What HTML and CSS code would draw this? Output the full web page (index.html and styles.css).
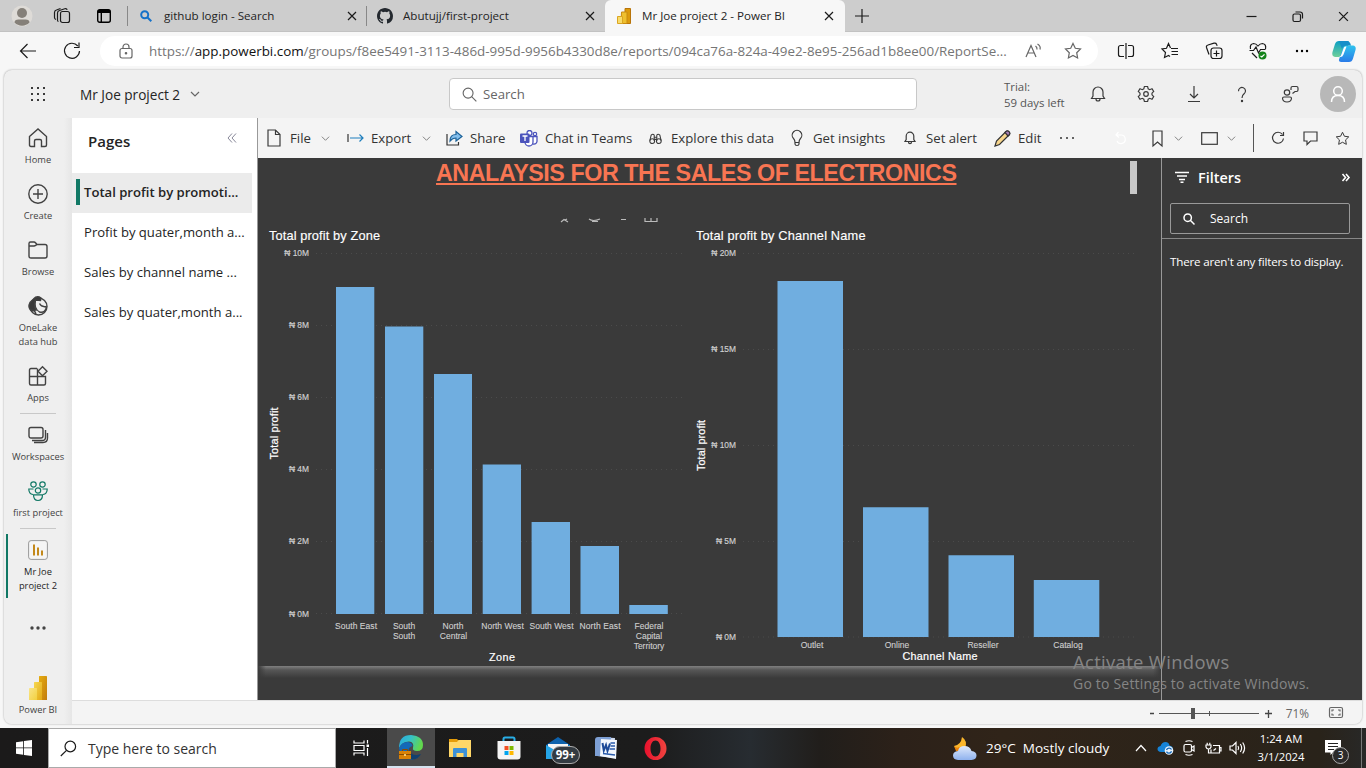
FILE: index.html
```html
<!DOCTYPE html>
<html lang="en">
<head>
<meta charset="utf-8">
<title>Mr Joe project 2 - Power BI</title>
<link rel="stylesheet" href="styles.css">
</head>
<body>
<svg class="defs" aria-hidden="true">
  <defs>
    <linearGradient id="pb1" x1="0" y1="0" x2="1" y2="1"><stop offset="0" stop-color="#e6ad10"/><stop offset="1" stop-color="#c27c0e"/></linearGradient>
    <linearGradient id="pb2" x1="0" y1="0" x2="1" y2="1"><stop offset="0" stop-color="#f6d751"/><stop offset="1" stop-color="#e2a915"/></linearGradient>
    <linearGradient id="pb3" x1="0" y1="0" x2="1" y2="1"><stop offset="0" stop-color="#f9e589"/><stop offset="1" stop-color="#f2d03e"/></linearGradient>
    <linearGradient id="edgeA" x1="0" y1="0" x2="1" y2="0.3"><stop offset="0" stop-color="#2aa9e0"/><stop offset="0.5" stop-color="#35c1c8"/><stop offset="1" stop-color="#62d84e"/></linearGradient>
    <linearGradient id="copA" x1="0" y1="0" x2="0" y2="1"><stop offset="0" stop-color="#0a9fc4"/><stop offset="1" stop-color="#6fd09a"/></linearGradient>
    <linearGradient id="copB" x1="0" y1="0" x2="0" y2="1"><stop offset="0" stop-color="#2fc3ee"/><stop offset="1" stop-color="#2a7be8"/></linearGradient>
    <linearGradient id="cloud" x1="0" y1="0" x2="0" y2="1"><stop offset="0" stop-color="#dfe9fb"/><stop offset="1" stop-color="#8fb2ee"/></linearGradient>
    <linearGradient id="opera" x1="0" y1="0" x2="1" y2="0"><stop offset="0" stop-color="#e8112d"/><stop offset="1" stop-color="#f0443f"/></linearGradient>
    <symbol id="x" viewBox="0 0 10 10"><path d="M1 1l8 8M9 1L1 9"/></symbol>
    <symbol id="chev" viewBox="0 0 10 10"><path d="M1 3l4 4 4-4"/></symbol>
    <symbol id="star" viewBox="0 0 18 18"><path d="M9 1.500l2.300 4.800 5.200.7-3.800 3.700.9 5.300L9 13.500 4.400 16l.9-5.300L1.500 7l5.200-.7z"/></symbol>
    <symbol id="pbi" viewBox="0 0 18 24"><rect x="10" width="8" height="24" rx=".6" fill="url(#pb1)" stroke="none"/><rect x="5" y="6" width="8" height="18" rx=".6" fill="url(#pb2)" stroke="none"/><rect y="12" width="8" height="12" rx=".6" fill="url(#pb3)" stroke="none"/></symbol>
  </defs>
</svg>

<header class="tabs">
  <div class="tab-tools">
    <svg width="22" height="22" viewBox="0 0 22 22"><circle cx="11" cy="11" r="10.500" fill="#dedbd7"/><circle cx="11" cy="8" r="5" fill="#858079"/><path d="M3.500 17.500q0-3 4-3h7q4 0 4 3a10.500 10.500 0 0 1-15 0z" fill="#858079"/></svg>
    <svg class="ic" width="18" height="18" viewBox="0 0 18 18"><rect x="7.500" y="4.500" width="9" height="11" rx="2"/><path d="M5.500 14.500q-1 0-1-1.500V6q0-2 2-2.500l6-2q1.500 0 1.500 1.500M3 12.500q-1.500-.5-1.500-2V5.500q0-2 2-2.500l4-1.500"/></svg>
    <svg class="ic thick" width="14" height="14" viewBox="0 0 14 14"><rect x=".7" y=".7" width="12.600" height="12.600" rx="2"/><path d="M1 2.500h12" stroke-width="3"/><path d="M4.300 4v9"/></svg>
  </div>
  <div class="tab">
    <svg class="ic blue" width="12" height="12" viewBox="0 0 12 12"><circle cx="4.700" cy="4.700" r="3.500"/><path d="M7.300 7.300l4 4"/></svg>
    <span>github login - Search</span>
    <svg class="ic" width="10" height="10"><use href="#x"/></svg>
  </div>
  <div class="tab">
    <svg width="16" height="16" viewBox="0 0 16 16"><path fill="#24292f" d="M8 0C3.580 0 0 3.580 0 8c0 3.540 2.290 6.530 5.470 7.590.4.070.55-.17.55-.38 0-.19-.010-.820-.010-1.490-2.010.37-2.530-.49-2.690-.94-.090-.23-.48-.94-.820-1.130-.28-.15-.68-.52-.010-.53.630-.010 1.080.58 1.230.82.720 1.210 1.870.87 2.330.66.070-.52.280-.87.510-1.070-1.780-.2-3.640-.89-3.640-3.950 0-.87.310-1.590.820-2.150-.080-.2-.36-1.020.080-2.120 0 0 .670-.21 2.200.82a7.600 7.600 0 0 1 4 0c1.530-1.040 2.200-.82 2.200-.82.440 1.100.160 1.920.080 2.120.510.560.820 1.270.820 2.150 0 3.070-1.870 3.750-3.650 3.950.290.250.540.730.540 1.480 0 1.070-.010 1.930-.010 2.200 0 .210.150.460.550.380A8 8 0 0 0 16 8c0-4.420-3.580-8-8-8z"/></svg>
    <span>Abutujj/first-project</span>
    <svg class="ic" width="10" height="10"><use href="#x"/></svg>
  </div>
  <div class="tab active">
    <svg width="14" height="16" viewBox="0 0 14 16"><path d="M8 .5h5.500v15H8z" fill="#dc9a0c" stroke="#b8740a"/><path d="M4.500 4H10v11.500H4z" fill="#efc02e" stroke="#c88a10"/><path d="M.5 8.500h5v7h-5z" fill="#f8dc6c" stroke="#dba522"/></svg>
    <span>Mr Joe project 2 - Power BI</span>
    <svg class="ic" width="10" height="10"><use href="#x"/></svg>
  </div>
  <div class="cell new-tab"><svg class="ic" width="14" height="14" viewBox="0 0 14 14"><path d="M7 0v14M0 7h14"/></svg></div>
  <div class="win">
    <svg class="ic" width="11" height="11" viewBox="0 0 11 11"><path d="M.5 5.500h10"/></svg>
    <svg class="ic" width="11" height="11" viewBox="0 0 11 11"><rect x="1" y="3" width="7.500" height="7.500" rx="1.500"/><path d="M3.500 1h4.500q2.500 0 2.500 2.500v4"/></svg>
    <svg class="ic" width="11" height="11" viewBox="0 0 10 10"><use href="#x"/></svg>
  </div>
</header>

<div class="address">
  <div class="cell"><svg class="ic" width="18" height="16" viewBox="0 0 18 16"><path d="M8.500 1L1.500 8l7 7M1.500 8H17"/></svg></div>
  <div class="cell"><svg class="ic" width="18" height="18" viewBox="0 0 18 18"><path d="M14.800 4A7.500 7.500 0 1 0 16.500 9M16 .5V5.500H11"/></svg></div>
  <div class="pill">
    <svg class="ic grey" width="14" height="16" viewBox="0 0 14 16"><rect x="1" y="5.500" width="12" height="9.500" rx="2"/><path d="M4 5.500V4a3 3 0 0 1 6 0v1.500"/><circle cx="7" cy="10.300" r=".7" fill="#555"/></svg>
    <span class="url">https://<b>app.powerbi.com</b>/groups/f8ee5491-3113-486d-995d-9956b4330d8e/reports/094ca76a-824a-49e2-8e95-256ad1b8ee00/ReportSe...</span>
    <svg class="ic grey" width="17" height="16" viewBox="0 0 17 16"><path d="M1 14L6 2.500 11 14M3 10h6M10.500 3q1.800 1.300 1.500 3.500M12.500 1q3.500 2 2.500 5.500"/></svg>
    <svg class="ic grey" width="18" height="18"><use href="#star"/></svg>
  </div>
  <div class="browser-tools">
    <svg class="ic" width="18" height="18" viewBox="0 0 18 18"><path d="M7 3.500H3.500a2 2 0 0 0-2 2v7a2 2 0 0 0 2 2H7M11 3.500h3.500a2 2 0 0 1 2 2v7a2 2 0 0 1-2 2H11M9 1v16"/></svg>
    <svg class="ic" width="18" height="18" viewBox="0 0 18 18"><path d="M9.500 6L7.500 1.500 5.500 6.300l-4.500.7 3.500 3.500-1 5 4-2 1.500 1M10 6.500h7M10.500 9.500H17M10.500 12.500H17"/></svg>
    <svg class="ic" width="18" height="18" viewBox="0 0 18 18"><rect x="6" y="6" width="11" height="10.500" rx="2.500"/><path d="M11.500 8.500v6M8.500 11.500h6M4 12.500l-2.500-7q-.5-2 1.500-2.500l6-1.800q2-.4 2.500 1l.7 1.500"/></svg>
    <svg class="ic" width="18" height="18" viewBox="0 0 18 18"><path d="M1.500 7Q.5 2 4.500 1.500 7 1.500 9 4q2-2.500 4.500-2.500Q17.500 2 16.500 7M.5 8.500h4L7 5l2.500 6 2-3.500h5M3 11l5 5"/><circle cx="13.500" cy="13.500" r="4" fill="#13831a" stroke="none"/><path d="M11.500 14l1.300 1 2.700-2.700" stroke="#fff"/></svg>
    <svg width="16" height="4" viewBox="0 0 16 4"><circle cx="3" cy="2" r="1.200"/><circle cx="8" cy="2" r="1.200"/><circle cx="13" cy="2" r="1.200"/></svg>
  </div>
  <div class="cell"><svg width="24" height="23" viewBox="0 0 24 23"><path d="M7 1h8.500q2 0 1.500 2.500l-4 11Q12 17 9.500 17H3Q-.5 16.500.5 12L3 4Q4 1 7 1z" fill="url(#copA)"/><path d="M17 22H9q-2.500 0-2-2.500L11 8q.8-2.500 3.500-2.500H21Q24.500 6 23.500 10L21 18.500Q20 22 17 22z" fill="url(#copB)"/><path d="M14.500 6.500h-1Q12 6.500 11.500 8.500L9.500 14q-.5 2.500-2.500 3h1.500q2 0 3-2.500z" fill="#fff"/><path d="M7 1h8q3 0 4 4.500h-5Q11 5.500 10 9z" fill="#168fc9"/></svg></div>
</div>

<div class="page">
  <div class="app-head">
    <div class="cell"><svg width="16" height="16" viewBox="0 0 16 16" fill="#3a3a3a"><path d="M1 1h2v2H1zM7 1h2v2H7zM13 1h2v2H13zM1 7h2v2H1zM7 7h2v2H7zM13 7h2v2H13zM1 13h2v2H1zM7 13h2v2H7zM13 13h2v2H13z"/></svg></div>
    <div class="crumb"><span class="crumb-name">Mr Joe project 2</span><svg class="ic grey" width="10" height="10"><use href="#chev"/></svg></div>
    <div class="search"><svg class="ic grey" width="15" height="15" viewBox="0 0 16 16"><circle cx="6.500" cy="6.500" r="5.300"/><path d="M10.300 10.300l5 5"/></svg><span>Search</span></div>
    <div class="trial">Trial:<br>59 days left</div>
    <div class="head-icons">
      <svg class="ic dark" width="16" height="18" viewBox="0 0 16 18"><path d="M1.500 13.500L3 11V7a5 5 0 0 1 10 0v4l1.500 2.500zM6 14a2 2 0 0 0 4 0"/></svg>
      <svg class="ic dark" width="18" height="18" viewBox="0 0 18 18"><path d="M7.400 1.500h3.200l.6 2.400 1.500.8 2.300-.9 1.700 2.700-1.700 1.700v1.600l1.700 1.700-1.700 2.700-2.300-.9-1.500.8-.6 2.400H7.400l-.6-2.400-1.500-.8-2.300.9-1.700-2.700L3 9.800V8.200L1.300 6.500 3 3.800l2.300.9 1.500-.8z"/><circle cx="9" cy="9" r="2.300"/></svg>
      <svg class="ic dark" width="14" height="18" viewBox="0 0 14 18"><path d="M7 1v12M3 9l4 4 4-4M1 16.500h12"/></svg>
      <svg class="ic dark" width="10" height="17" viewBox="0 0 10 17"><path d="M1.500 5.200a3.500 3.500 0 1 1 5.800 2.400Q5 9.300 5 12"/><circle cx="5" cy="15" r=".6" fill="#444"/></svg>
      <svg class="ic dark" width="18" height="18" viewBox="0 0 18 18"><circle cx="6" cy="7.500" r="2.700"/><path d="M3 12h6q1.500 0 1.500 1.500Q10 17 6 17t-4.500-3.500Q1.500 12 3 12zM10 5V3q0-1.500 1.500-1.500h4Q17 1.500 17 3v2q0 1.500-1.500 1.500H14L11.500 8.500"/></svg>
    </div>
    <div class="cell"><div class="avatar"><svg class="ic white" width="18" height="18" viewBox="0 0 18 18"><circle cx="9" cy="6" r="4.300"/><path d="M2.500 17q0-6.500 6.500-6.500t6.500 6.500"/></svg></div></div>
  </div>

  <div class="body">
    <nav class="rail">
      <a><svg class="ic nav" viewBox="0 0 20 20"><path d="M1.500 8.500L10 1l8.500 7.500V17q0 1.500-1.500 1.500h-3.500V13q0-1.500-1.500-1.500H8Q6.500 11.500 6.500 13v5.500H3Q1.500 18.500 1.500 17z"/></svg><span>Home</span></a>
      <a><svg class="ic nav" viewBox="0 0 20 20"><circle cx="10" cy="10" r="9.200"/><path d="M10 5v10M5 10h10"/></svg><span>Create</span></a>
      <a><svg class="ic nav" viewBox="0 0 20 20"><path d="M1 6V3.500Q1 2 2.500 2H6q1 0 1.500.8L9 4.500h8q2 0 2 2V16q0 2-2 2H3q-2 0-2-2V6h5q1 0 1.700-.7L9 4.500"/></svg><span>Browse</span></a>
      <a class="two"><svg class="ic nav" viewBox="0 0 20 20"><circle cx="10.500" cy="10.500" r="8.500"/><path d="M5.500 3Q9-.8 13 2L12.500 4.500 7.500 4Q5.500 10 8 14L3.500 15Q-2.500 9 5.500 3z" fill="#3a3a3a"/><path d="M7.500 3.500q-2 9 4 12.500 6 1.500 7-5.500M11.500 7.500q2 4 7 3M3 14q4-.5 5 4.500"/></svg><span>OneLake<br>data hub</span></a>
      <a><svg class="ic nav" viewBox="0 0 20 20"><path d="M9 2.500H3Q1.500 2.500 1.500 4v13.500Q1.500 19 3 19h13q1.500 0 1.500-1.500V10.500h-16M9.500 2.500V19"/><path d="M14.500.8l4.500 4.500-4.500 4.500L10 5.300z"/></svg><span>Apps</span></a>
      <i class="sep"></i>
      <a><svg class="ic nav" viewBox="0 0 20 20"><rect x="1" y="2.500" width="14" height="10.500" rx="2"/><path d="M4 15.500h10q3.500 0 3.500-3V5M6 17.500h9q4.500 0 4.500-4.500V8"/></svg><span>Workspaces</span></a>
      <a class="green"><svg class="ic nav" viewBox="0 0 20 20"><circle cx="5.500" cy="3.500" r="2.700"/><circle cx="14.500" cy="3.500" r="2.700"/><circle cx="10" cy="9.500" r="2.700"/><path d="M5.500 13.800h9q0 5.700-4.500 5.700t-4.500-5.700zM5.500 8H.8Q.8 13 5 13.500M14.500 8h4.700q0 5-4.200 5.500"/></svg><span>first project</span></a>
      <i class="sep"></i>
      <a class="two current"><svg class="nav" viewBox="0 0 20 20"><rect x=".6" y=".6" width="18.800" height="18.800" rx="2.500" fill="#f5f5f5" stroke="#999"/><path d="M6 4.500v11M10 7.500v8M14 10.500v5" stroke="#c0830f" stroke-width="1.900"/></svg><span>Mr Joe<br>project 2</span></a>
      <div class="more"><svg width="18" height="6" viewBox="0 0 18 6" fill="#444"><circle cx="3" cy="3" r="1.700"/><circle cx="9" cy="3" r="1.700"/><circle cx="15" cy="3" r="1.700"/></svg></div>
      <a class="product"><svg width="18" height="24"><use href="#pbi"/></svg><span>Power BI</span></a>
    </nav>

    <div class="work">
      <div class="work-row">
        <aside class="pages">
          <div class="pages-head"><span>Pages</span><svg class="ic faint" width="10" height="10" viewBox="0 0 10 10"><path d="M5 .5L1 5l4 4.500M9 .5L5 5l4 4.500"/></svg></div>
          <div class="pg sel"><span>Total profit by promoti...</span></div>
          <div class="pg"><span>Profit by quater,month a...</span></div>
          <div class="pg"><span>Sales by channel name ...</span></div>
          <div class="pg"><span>Sales by quater,month a...</span></div>
        </aside>

        <main class="main">
          <div class="toolbar">
            <div class="cmd drop"><svg class="ic dark" width="14" height="18" viewBox="0 0 14 18"><path d="M1 1h7.500L13 5.500V17H1zM8.500 1v4.500H13"/></svg><span>File</span><svg class="ic chev" width="9" height="9"><use href="#chev"/></svg></div>
            <div class="cmd drop"><svg class="ic" width="17" height="12" viewBox="0 0 17 12"><path d="M1 2v8" stroke="#333"/><path d="M3 6h13M12.500 2.500L16 6l-3.500 3.500" stroke="#1f7fbd"/></svg><span>Export</span><svg class="ic chev" width="9" height="9"><use href="#chev"/></svg></div>
            <div class="cmd"><svg class="ic" width="17" height="16" viewBox="0 0 17 16"><path d="M1 4v11h11.500v-3" stroke="#333"/><path d="M4 11q0-6.500 6-6.500V1.500l6 5-6 4.500V8Q6.500 8 4 11z" fill="#83beec" stroke="#1c6299"/></svg><span>Share</span></div>
            <div class="cmd"><svg width="18" height="17" viewBox="0 0 18 17"><circle cx="9.500" cy="3" r="2.500" fill="#fff" stroke="#4b53bc" stroke-width="1.300"/><circle cx="15" cy="4" r="1.700" fill="#fff" stroke="#4b53bc" stroke-width="1.200"/><path d="M5 6.500h8v5.500a4 4 0 0 1-8 0zM13 6.500h4v5q-.5 3-4 2.500" fill="#fff" stroke="#4b53bc" stroke-width="1.300"/><rect y="3.500" width="9.500" height="9.500" rx="1" fill="#4b53bc"/><path d="M2.500 6h5M5 6v5" stroke="#fff" stroke-width="1.300"/></svg><span>Chat in Teams</span></div>
            <div class="cmd"><svg class="ic dark" width="13" height="13" viewBox="0 0 15 14"><circle cx="3.700" cy="10" r="2.800"/><circle cx="11.300" cy="10" r="2.800"/><path d="M1 9.500L2.500 3Q4.500 1 6 3v7M14 9.500L12.500 3Q10.500 1 9 3v7M6 5.500h3M6 8h3"/></svg><span>Explore this data</span></div>
            <div class="cmd"><svg class="ic dark" width="12" height="18" viewBox="0 0 12 18"><path d="M4 13.500Q4 11 2.500 9.500a4.800 4.800 0 1 1 7 0Q8 11 8 13.500zM4 13.500V15q0 1.500 2 1.500T8 15v-1.500"/></svg><span>Get insights</span></div>
            <div class="cmd"><svg class="ic dark" width="12" height="14" viewBox="0 0 12 14"><path d="M1 10.500h10L9.800 8.500V5a3.800 3.800 0 0 0-7.600 0v3.500zM4.500 11a1.500 1.700 0 0 0 3 0"/></svg><span>Set alert</span></div>
            <div class="cmd"><svg class="ic" width="17" height="17" viewBox="0 0 17 17"><path d="M1 16l1.500-5L12 1.500q1.500-1 3 .5t0 3L5.500 14.500z" fill="#f7d58b" stroke="#333"/><path d="M11 2.500L12.500 1q1.500-.5 2.700.8T15.500 4.500L14 6z" fill="#a67db8" stroke="#333"/></svg><span>Edit</span></div>
            <div class="cell"><svg width="16" height="4" viewBox="0 0 16 4" fill="#333"><circle cx="2" cy="2" r="1"/><circle cx="8" cy="2" r="1"/><circle cx="14" cy="2" r="1"/></svg></div>
            <div class="view-tools">
              <svg class="ic white undo" width="12" height="14" viewBox="0 0 12 14"><path d="M3.500 1L1 4l3 2.500M1.500 4H6a4.300 4.300 0 1 1-4 6"/></svg>
              <svg class="ic dark bookmark" width="11" height="17" viewBox="0 0 11 17"><path d="M1 1h9v15l-4.500-4L1 16z"/></svg>
              <svg class="ic chev c1" width="9" height="9"><use href="#chev"/></svg>
              <svg class="ic dark view" width="17" height="13" viewBox="0 0 17 13"><rect x=".7" y=".7" width="15.600" height="11.600"/></svg>
              <svg class="ic chev c2" width="9" height="9"><use href="#chev"/></svg>
              <i class="bar"></i>
              <svg class="ic dark refresh" width="14" height="14" viewBox="0 0 14 14"><path d="M11.500 3.500A5.500 5.500 0 1 0 12.500 7.500M12.500 1v3.500H9"/></svg>
              <svg class="ic dark comment" width="15" height="15" viewBox="0 0 15 15"><path d="M1 1h13v9H7.500L4 13.500V10H1z"/></svg>
              <svg class="ic dark fav" width="15" height="15"><use href="#star" width="15" height="15"/></svg>
            </div>
          </div>

          <div class="report">
            <div class="canvas">
              <div class="sheet">
                <h1 class="title"><span>ANALAYSIS FOR THE SALES OF ELECTRONICS</span></h1>
                <i class="scroll"></i>
                <div class="charts">
                  <svg width="432" height="448" viewBox="258 218 432 448">
                    <path d="M561 222l3-2.500 4 2.500M567 219l-2 1M589 219q4 3 11 0M592 221.500h6M621 219.500h5M645 218v3.500h12V218M651 218v3" stroke="#bbb" fill="none" stroke-width="1.200"/>
                    <text class="ct" x="269" y="240" textLength="111">Total profit by Zone</text>
                    <path class="grid" d="M316 253.500H686M316 325.500H686M316 397.500H686M316 469.500H686M316 541.500H686M316 613.500H686"/>
                    <g class="tick"><text x="309" y="256">₦ 10M</text><text x="309" y="328">₦ 8M</text><text x="309" y="400">₦ 6M</text><text x="309" y="472">₦ 4M</text><text x="309" y="544">₦ 2M</text><text x="309" y="617">₦ 0M</text></g>
                    <g class="bars"><path d="M336 287h38.300v327H336zM385 326.500h38.300V614H385zM434 374h38v240H434zM482.700 464.500H521V614h-38.300zM531.600 522H570v92h-38.400zM580.500 546H619v68h-38.500zM629.300 605h38.500v9h-38.500z"/></g>
                    <g class="cat"><text x="356" y="629" textLength="42">South East</text><text x="404" y="629">South</text><text x="404" y="639">South</text><text x="453" y="629">North</text><text x="453.500" y="639">Central</text><text x="502.500" y="629" textLength="42.500">North West</text><text x="551.500" y="629" textLength="44">South West</text><text x="600" y="629" textLength="41">North East</text><text x="649" y="629">Federal</text><text x="649" y="639">Capital</text><text x="649" y="649">Territory</text></g>
                    <text class="ax" x="502" y="661" textLength="26">Zone</text>
                    <text class="ax" transform="translate(278 433.500) rotate(-90)" textLength="52">Total profit</text>
                  </svg>
                  <svg width="471" height="448" viewBox="690 218 471 448">
                    <text class="ct" x="696" y="240" textLength="169.500">Total profit by Channel Name</text>
                    <path class="grid" d="M743 253.500H1134M743 349.500H1134M743 445.500H1134M743 541.500H1134M743 637H1134"/>
                    <g class="tick"><text x="736" y="256">₦ 20M</text><text x="736" y="352">₦ 15M</text><text x="736" y="448">₦ 10M</text><text x="736" y="544">₦ 5M</text><text x="736" y="640">₦ 0M</text></g>
                    <g class="bars"><path d="M777.500 281H843v356h-65.500zM863 507.300h65.500V637H863zM948.500 555.300H1014V637h-65.500zM1033.800 580h65.500v57h-65.500z"/></g>
                    <g class="cat"><text x="812" y="648">Outlet</text><text x="897" y="648">Online</text><text x="983" y="648" textLength="31">Reseller</text><text x="1068" y="648">Catalog</text></g>
                    <text class="ax" x="940" y="660" textLength="75">Channel Name</text>
                    <text class="ax" transform="translate(705 445.500) rotate(-90)" textLength="51">Total profit</text>
                  </svg>
                </div>
              </div>
              <i class="shade"></i>
            </div>
            <aside class="filters">
              <div class="f-head"><svg class="ic white f2" width="14" height="12" viewBox="0 0 14 12"><path d="M0 1.500h14M2 5h10M4 8.500h6M5.500 11.300h3"/></svg><span>Filters</span><svg class="ic white f2" width="8" height="9" viewBox="0 0 8 9"><path d="M.5 1L3.500 4.500.5 8M4 1l3 3.500L4 8"/></svg></div>
              <div class="f-search"><svg class="ic white f1" width="12" height="12" viewBox="0 0 12 12"><circle cx="4.700" cy="4.700" r="3.700"/><path d="M7.300 7.300l4.200 4.200"/></svg><span>Search</span></div>
              <p class="f-empty">There aren't any filters to display.</p>
            </aside>
          </div>
        </main>
      </div>
      <footer class="status">
        <svg width="122" height="16" viewBox="0 0 122 16"><path d="M0 8.500h4M115 8.500h8M118.500 5v8" stroke="#444" stroke-width="1.300"/><path d="M9 8.500h100M59.500 6v5" stroke="#555"/><rect x="41" y="3" width="4" height="11" fill="#555"/></svg>
        <span>71%</span>
        <svg class="ic grey" width="14" height="11" viewBox="0 0 14 11"><rect x=".5" y=".5" width="13" height="10" rx="1.500"/><path d="M3 4.500V3h2M9 3h2v1.500M11 6.500V8H9M5 8H3V6.500"/></svg>
      </footer>
    </div>
  </div>
</div>

<div class="taskbar">
  <div class="cell"><svg width="16" height="16" viewBox="0 0 16 16" fill="#fff"><path d="M0 2.200L7.200 1.200V7.500H0zM8 1.100L16 0v7.500H8zM0 8.300h7.200v6.400L0 13.700zM8 8.300h8V16l-8-1.100z"/></svg></div>
  <div class="t-search"><svg class="ic" width="17" height="17" viewBox="0 0 17 17"><circle cx="10.300" cy="6.500" r="5.300"/><path d="M6.500 10.300L.8 16"/></svg><span>Type here to search</span></div>
  <div class="cell"><svg class="ic white" width="17" height="16" viewBox="0 0 17 16"><path d="M1 .5v2.500h10V.5M1 15.500V13h10v2.500M1 5.500h10v5H1zM14.500 0v3.500M14.500 8v8"/><rect x="13.500" y="4.500" width="2.500" height="2.500" fill="#fff" stroke="none"/></svg></div>
  <div class="cell open"><svg width="26" height="26" viewBox="0 0 26 26"><path d="M1 14Q1 1 13 1q12 1 12 10 0 6-6 6-5-.5-4-3 1.500-6-4-6.500Q4 7.500 1 14z" fill="url(#edgeA)"/><path d="M1 14Q4 7.500 10 8q4 .5 4.500 4-4 1-4 5 1 6 11 5-3.500 3.500-8.500 3.500Q2 25 1 14z" fill="#1469b8"/><path d="M11 16q2 5.500 8 5l4-1q-3 5.500-9 5.500-6-2-3-9.500z" fill="#12406f"/><rect x="1" y="17" width="12" height="8" fill="#d98207"/><path d="M1 20.500h12" stroke="#8a4b00"/><path d="M4.500 17v-1.500h5V17" stroke="#8a4b00" fill="none"/><circle cx="7" cy="21" r="1.100" fill="#ffe18d"/></svg></div>
  <div class="cell"><svg width="22" height="20" viewBox="0 0 22 20"><path d="M0 1h8l2 2v4H0z" fill="#e59c09"/><path d="M0 4h8l1.500-2H22v17H0z" fill="#ffd768"/><path d="M4 19v-8q0-1 1-1h12q1 0 1 1v8h-3.500v-4h-7v4z" fill="#3d91d6"/></svg></div>
  <div class="cell"><svg width="24" height="24" viewBox="0 0 24 24"><path d="M6.500 7V3q0-1.500 1.500-1.500h8q1.500 0 1.500 1.500v4" fill="none" stroke="#29aee6" stroke-width="2"/><path d="M.5 5h23v15.500q0 3-3 3h-17q-3 0-3-3z" fill="#f4f4f4"/><path fill="#f25022" d="M7.500 10h4v4h-4z"/><path fill="#7fba00" d="M12.500 10h4v4h-4z"/><path fill="#00a4ef" d="M7.500 15h4v4h-4z"/><path fill="#ffb900" d="M12.500 15h4v4h-4z"/></svg></div>
  <div class="cell mail"><svg width="24" height="22" viewBox="0 0 24 22"><path d="M0 8L12 0l12 8v14H0z" fill="#0d62ad"/><path d="M2 7h20v9H2z" fill="#f4f4f4"/><path d="M0 8l12 7 12-7v14H0z" fill="#25a5e8"/></svg><b class="badge">99+</b></div>
  <div class="cell"><svg width="24" height="24" viewBox="0 0 24 24"><path d="M4 1l17 1-1 20-17-2z" fill="#cbd8ee"/><path d="M1 4Q1 1 4 1h13l-2 19H1z" fill="#7d9fd4"/><path d="M7 3l16 1-1 19-16-3z" fill="#f3f7fd"/><path d="M8.500 7l1.300 7.500L12 9l1.500 6L16 7.500" fill="none" stroke="#1d4a98" stroke-width="2"/><path d="M16.500 7H21M16.500 10H21M15.500 13H21M9 17.500l12 1.500" stroke="#2a5bab" stroke-width="1.400"/></svg></div>
  <div class="cell"><svg width="23" height="23" viewBox="0 0 23 23"><path fill="url(#opera)" fill-rule="evenodd" d="M11.500 0a11 11.500 0 1 0 0 23 11 11.500 0 0 0 0-23zm0 3.500c3 0 5 3.500 5 8s-2 8-5 8-5-3.500-5-8 2-8 5-8z"/></svg></div>
  <div class="weather"><svg width="26" height="25" viewBox="0 0 26 25"><path d="M10 1q6 4 3 11l-8 3-3-5q7-1 8-9z" fill="#fbb62c"/><path d="M2 10q3 3 5 1l2 4H4z" fill="#e8820c"/><path d="M6 24q-5-.5-5-4.500t5-4.500q1-5 6.500-5t7 5q5 .5 5 4.500t-5 4.500z" fill="url(#cloud)"/></svg><span>29°C&nbsp; Mostly cloudy</span></div>
  <div class="tray">
    <svg class="ic white" width="12" height="8" viewBox="0 0 12 8"><path d="M1 7l5-5.500L11 7"/></svg>
    <svg width="17" height="14" viewBox="0 0 17 14"><path d="M4 11Q.5 10.500.5 8t3-3Q5 1 8.500 1 12 1 12.500 4.500q3 .5 3.500 3V11z" fill="#1583d7"/><circle cx="12" cy="9.500" r="4.300" fill="#e9f2fb"/><path d="M9.500 9a2.700 2.700 0 0 1 5-.5M14.500 10.300a2.700 2.700 0 0 1-5 .3" stroke="#1268b8" fill="none" stroke-width="1.300"/></svg>
    <svg class="ic white" width="12" height="16" viewBox="0 0 12 16"><rect x="1" y="4.500" width="7.500" height="7.500" rx="1.500"/><path d="M8.500 7.500L11 6v5l-2.500-1.500M2.500 1.500q3.500-1.500 7 0M2.500 14.500q3.500 1.500 7 0"/></svg>
    <svg class="ic white" width="17" height="13" viewBox="0 0 17 13"><path d="M6 7.500V11h8.500V3.500H8M14.500 5.500H16V9h-1.500M1 3h5v2Q5.500 7 3.500 7T1 5zM2.200 3V.8M4.800 3V.8M3.500 7v4H6M8.500 8.500l2.500-2"/></svg>
    <svg class="ic white" width="17" height="14" viewBox="0 0 17 14"><path d="M1 5h2.500L7 1.500v11L3.500 9H1zM9 5q1.300 2 0 4M11.300 3q2.700 4 0 8M13.700 1.500q3.800 5.500 0 11"/></svg>
  </div>
  <div class="clock">1:24 AM<br>3/1/2024</div>
  <div class="cell note"><svg width="16" height="16" viewBox="0 0 16 16"><path d="M0 0h16v12.500H8L5.500 15v-2.500H0z" fill="#fff"/><path d="M3 3.500h10M3 6.500h10M3 9.500h6" stroke="#222"/></svg><b class="count">3</b></div>
</div>

<div class="watermark"><div class="w1">Activate Windows</div><div class="w2">Go to Settings to activate Windows.</div></div>
</body>
</html>
```
FILE: styles.css
```css
* { box-sizing: border-box; }
body { margin: 0; width: 1366px; height: 768px; overflow: hidden; position: relative; background: #f7f7f7; color: #242424; font-family: "Open Sans", "Noto Sans", sans-serif; font-size: 13px; display: flex; flex-direction: column; white-space: nowrap; }
svg { display: block; flex: none; }
.defs { position: absolute; width: 0; height: 0; }
.ic { fill: none; stroke: #1b1b1b; stroke-width: 1.2; overflow: visible; }
.ic.grey { stroke: #666; }
.ic.dark { stroke: #3a3a3a; }
.ic.white { stroke: #fff; }
.ic.faint { stroke: #889; stroke-width: 1; }
.ic.blue { stroke: #1672c9; stroke-width: 2; }
.ic.thick { stroke-width: 1.4; stroke: #000; }
.cell { display: grid; place-items: center; }

/* Browser tabs */
.tabs { flex: none; height: 32px; background: #cdcdcd; display: flex; font-size: 11.6px; box-shadow: inset 0 -1px #c2c2c2; }
.tab-tools { width: 128px; display: grid; grid-template-columns: 44px 36px 48px; place-items: center; background: linear-gradient(#888, #888) 127px 6px / 1px 20px no-repeat; }
.tab { width: 239px; padding-bottom: 1px; display: grid; grid-template-columns: 36px 1fr 31px; align-items: center; justify-items: center; background: linear-gradient(#888, #888) 238px 6px / 1px 20px no-repeat; }
.tab span { justify-self: start; }
.tab + .tab { width: 238px; background: none; }
.tab.tab.active { width: 240px; grid-template-columns: 37px 1fr 32px; background: #f7f7f7; border-radius: 6px 6px 0 0; }
.new-tab { width: 34px; }
.win { margin-left: auto; display: grid; grid-template-columns: repeat(3, 46px); place-items: center; }

/* Address bar */
.address { flex: none; height: 38px; padding-left: 6px; display: grid; grid-template-columns: 44px 44px 1004px 226px 40px; align-items: center; }
.pill { margin-left: 6px; height: 30px; border-radius: 15px; background: #fff; padding: 0 5px 0 3px; display: grid; grid-template-columns: 46px 1fr 40px 40px; align-items: center; justify-items: center; }
.url { justify-self: start; color: #757575; font-size: 13.4px; }
.url b { color: #111; font-weight: 400; }
.browser-tools { padding-left: 6px; display: grid; grid-template-columns: repeat(5, 44px); place-items: center; }

/* App shell */
.page { flex: none; margin: 0 4px; height: 654px; border-radius: 8px; overflow: hidden; background: #efefef; box-shadow: 0 0 2px #999; }
.app-head { height: 48px; display: grid; grid-template-columns: 68px 377px 468px 87px 70px 240px 48px; align-items: center; }
.app-head > :nth-child(4) { grid-column: 5; }
.crumb { display: flex; align-items: center; padding-left: 8px; gap: 10px; }
.crumb-name { font-size: 13.6px; }
.search { height: 32px; border: 1px solid #c8c8c8; border-radius: 4px; background: #fff; display: flex; align-items: center; padding-left: 12px; gap: 6px; color: #666; font-size: 13.2px; }
.trial { font-size: 11.4px; line-height: 16px; padding-top: 1px; color: #555; }
.head-icons { display: grid; grid-template-columns: repeat(5, 48px); place-items: center; }
.avatar { width: 36px; height: 36px; border-radius: 50%; background: #b8b8b8; display: grid; place-items: center; }
.avatar .ic { stroke-width: 1.5; }
.body { display: flex; height: 606px; }

.rail { width: 68px; display: flex; flex-direction: column; align-items: center; background: linear-gradient(90deg, #efefef 60px, #e6e6e6); }
.rail a { width: 68px; height: 56px; padding-top: 10px; display: flex; flex-direction: column; align-items: center; gap: 5px; font-size: 9.3px; line-height: 14px; text-align: center; color: #424242; }
.rail a.two { height: 70px; }
.nav { width: 20px; height: 20px; stroke: #424242; }
.ic.nav { stroke-width: 1.4; }
.green .nav { stroke: #117865; stroke-width: 1.2; }
.sep { width: 36px; height: 1px; margin: 1px 0; background: #c8c8c8; }
.rail a.current { color: #242424; font-weight: 500; background: linear-gradient(#117865, #117865) 2px 4px / 2px 64px no-repeat; }
.more { height: 56px; display: grid; place-items: center; }
.rail a.product { margin-top: 10px; gap: 3px; }

.work { width: 1290px; }
.work-row { display: flex; height: 582px; }
.pages { width: 186px; background: #fff; border-right: 1px solid #999; }
.pages-head { height: 55px; padding: 0 20px 10px 16px; display: flex; align-items: center; justify-content: space-between; font-size: 15px; font-weight: 600; }
.pages-head svg { margin-bottom: 5px; }
.pg { height: 40px; width: 180px; padding: 0 0 2px 12px; display: flex; align-items: center; font-size: 13.1px; }
.pg.sel { background: linear-gradient(#117865, #117865) 4px 6px / 4px 26px no-repeat #ebebeb; font-weight: 600; }

.main { width: 1104px; }
.toolbar { height: 40px; background: #f4f4f4; display: grid; grid-template-columns: 81px 99px 75px 126px 142px 113px 92px 65px 32px 279px; align-items: center; font-size: 13.2px; color: #333; }
.cmd { display: grid; grid-template-columns: 32px 1fr; align-items: center; justify-items: center; }
.cmd.drop { grid-template-columns: 32px 1fr 30px; }
.cmd span { justify-self: start; }
.chev { stroke: #777; stroke-width: 1; }
.view-tools { display: flex; align-items: center; }
.undo { margin-left: 32px; }
.bookmark { margin-left: 25px; }
.c1 { margin-left: 11px; }
.view { margin-left: 18px; }
.c2 { margin-left: 9px; }
.bar { width: 1px; height: 28px; margin-left: 17px; background: #555; }
.refresh { margin-left: 17px; }
.comment { margin-left: 18px; }
.fav { margin-left: 17px; }

/* Report */
.report { height: 542px; display: flex; background: #3a3a3a; color: #fff; }
.canvas { width: 903px; }
.sheet { height: 508px; display: grid; grid-template-columns: 870px 33px; grid-template-rows: 60px 448px; }
.title { margin: 0; padding-left: 178px; font: 700 23.3px/31px "Liberation Sans", Arial, sans-serif; letter-spacing: -0.45px; color: #f87552; text-decoration: underline; text-decoration-thickness: 2px; text-underline-offset: 2px; }
.scroll { width: 7px; height: 33px; margin: 3px 0 0 2px; background: #c8c8c8; }
.charts { grid-column: 1 / 3; display: flex; }
.shade { display: block; height: 12px; background: linear-gradient(90deg, #3a3a3a, transparent 8px 895px, #3a3a3a), linear-gradient(#808080, #565656 4px, #3a3a3a); }
.charts text { font-family: "Liberation Sans", Arial, sans-serif; fill: #fff; }
.charts .ct { font-size: 12.8px; stroke: #fff; stroke-width: .15; }
.charts .ax { font-size: 10.8px; text-anchor: middle; stroke: #fff; stroke-width: .2; }
.charts .tick text { font-size: 8.4px; text-anchor: end; fill: #d0d0d0; stroke: #d0d0d0; stroke-width: .15; }
.charts .cat text { font-size: 8.5px; text-anchor: middle; fill: #d0d0d0; stroke: #d0d0d0; stroke-width: .1; }
.grid { stroke: #4b4b4b; stroke-width: 1; stroke-dasharray: 1 4; }
.bars { fill: #70aee0; }

.filters { width: 201px; border-left: 1px solid #999; font-size: 12px; }
.f-head { height: 40px; padding: 0 12px 2px 13px; display: grid; grid-template-columns: 23px 1fr 8px; align-items: center; font-size: 14.4px; font-weight: 600; }
.f2 { stroke-width: 1.6; }
.f1 { stroke-width: 1.5; }
.f-search { width: 180px; height: 31px; margin: 5px 0 0 8px; border: 1px solid #999; border-radius: 2px; display: flex; align-items: center; padding-left: 12px; gap: 15px; }
.f-empty { margin: 4px 0 0; border-top: 1px solid #888; padding: 15px 0 0 8px; line-height: 16px; font-size: 11.6px; letter-spacing: -0.18px; }

.status { height: 24px; background: #f4f4f4; border-top: 1px solid #ddd; display: flex; align-items: center; justify-content: flex-end; padding-right: 19px; font-size: 11.8px; color: #666; }
.status span { margin: 0 20px 0 14px; }

/* Windows taskbar */
.taskbar { flex: none; margin-top: 4px; height: 40px; color: #fff; background: linear-gradient(#777, #777) 1361px 0 / 1px 40px no-repeat, linear-gradient(90deg, #1b1a1a, #1c1c1c 650px, #272c31 750px, #211e1b 820px, #2c2119 900px, #302419 1000px, #29231a 1320px, #282827); display: grid; grid-template-columns: 48px 288px 51px 48px 49px 49px 49px 48px 50px 449px 120px 64px 53px; align-items: stretch; }
.t-search { background: #fff; border: 1px solid #aaa; color: #333; display: flex; align-items: center; padding-left: 11px; gap: 11px; font-size: 14px; }
.open { background: #4a4a4a; border-bottom: 2px solid #d5e3ef; }
.mail, .note { position: relative; }
.badge { position: absolute; left: 18px; top: 18px; width: 29px; height: 18px; border-radius: 9px; border: 1px solid #aaa; background: #333b42; font-size: 11.5px; line-height: 16px; text-align: center; }
.weather { display: flex; align-items: center; padding-left: 272px; gap: 8px; font-size: 13.5px; }
.tray { display: grid; grid-template-columns: repeat(5, 24px); place-items: center; }
.clock { font-size: 11.3px; line-height: 18px; padding-top: 2px; text-align: center; }
.note { padding-right: 13px; }
.count { position: absolute; right: 17px; top: 19px; width: 17px; height: 17px; border: 1px solid #aaa; border-radius: 50%; background: #2b2b2b; font-size: 10px; line-height: 15px; font-weight: 400; text-align: center; }

.watermark { position: absolute; left: 1073px; top: 651px; color: #858585; }
.w1 { font-size: 18.4px; line-height: 22px; letter-spacing: 0.35px; }
.w2 { font-size: 14px; line-height: 22px; letter-spacing: 0.2px; }
```
